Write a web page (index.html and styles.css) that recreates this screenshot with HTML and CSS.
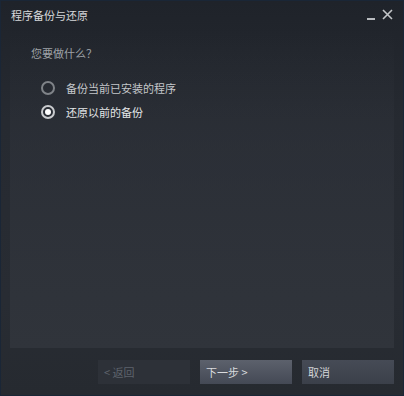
FILE: index.html
```html
<!DOCTYPE html>
<html lang="zh-CN">
<head>
    <meta charset="UTF-8">
    <title>程序备份与还原</title>
    <link rel="stylesheet" href="styles.css">
</head>
<body>
    <div class="window">
        <!-- Title bar -->
        <div class="titlebar">
            <span class="title">程序备份与还原</span>
            <div class="controls">
                <svg class="ctl" width="10" height="10" viewBox="0 0 10 10">
                    <rect x="1" y="8" width="8" height="2" fill="#b9bcc0"/>
                </svg>
                <svg class="ctl" width="11" height="11" viewBox="0 0 11 11">
                    <path d="M1 1 L10 10 M10 1 L1 10" stroke="#c3c6c9" stroke-width="1.6"/>
                </svg>
            </div>
        </div>

        <!-- Options -->
        <div class="panel">
            <p class="question">您要做什么？</p>
            <div class="options">
                <label class="option">
                    <span class="radio"></span>
                    备份当前已安装的程序
                </label>
                <label class="option selected">
                    <span class="radio"></span>
                    还原以前的备份
                </label>
            </div>
        </div>

        <!-- Buttons -->
        <div class="footer">
            <button class="btn btn-disabled">&lt; 返回</button>
            <button class="btn btn-primary">下一步 &gt;</button>
            <button class="btn btn-secondary">取消</button>
        </div>
    </div>
</body>
</html>
```

FILE: styles.css
```css
body {
    margin: 0;
    background: #1b2030;
    font-family: "Noto Sans CJK SC", "Noto Sans", Arial, sans-serif;
    font-size: 11px;
}
.window {
    width: 402px;
    height: 394px;
    border: 1px solid #1a2636;
    background: linear-gradient(to bottom, #1f232a 0, #262a31 120px, #282c33 300px, #262a30 100%);
    display: flex;
    flex-direction: column;
}
.titlebar {
    height: 30px;
    display: flex;
    justify-content: space-between;
    align-items: flex-start;
    padding: 0 10px;
}
.title {
    color: #d6d8da;
    margin-top: 7px;
    line-height: 14px;
}
.controls {
    display: flex;
    align-items: flex-end;
    gap: 6px;
    margin-top: 8px;
    margin-right: 0;
}
.panel {
    height: 317px;
    margin: 0 9px;
    padding: 15px 21px 0;
    box-sizing: border-box;
    background: linear-gradient(to bottom, rgba(48, 52, 60, 0) 0, rgba(48, 52, 60, 0.5) 120px, #30343b 100%);
}
.question {
    margin: 0;
    line-height: 14px;
    color: #9ea2a7;
}
.options {
    margin-top: 16px;
    padding-left: 10px;
}
.option {
    display: flex;
    align-items: center;
    height: 24px;
    gap: 11px;
    color: #c4c7ca;
}
.option.selected {
    color: #e4e6e8;
}
.radio {
    width: 14px;
    height: 14px;
    box-sizing: border-box;
    border: 2px solid #7f8388;
    border-radius: 50%;
    display: flex;
    align-items: center;
    justify-content: center;
}
.selected .radio {
    border-color: #c9cbce;
}
.selected .radio::after {
    content: '';
    width: 6px;
    height: 6px;
    border-radius: 50%;
    background: #ffffff;
}
.footer {
    display: flex;
    justify-content: flex-end;
    gap: 10px;
    padding: 12px 9px 0;
}
.btn {
    width: 92px;
    height: 24px;
    border: none;
    padding: 0 6px;
    text-align: left;
    font-family: inherit;
    font-size: 11px;
}
.btn-disabled {
    background: #2d3138;
    color: #5d636c;
}
.btn-primary {
    background: linear-gradient(to bottom, #5c616c, #444955);
    color: #d9dbde;
}
.btn-secondary {
    background: linear-gradient(to bottom, #464b56, #3b404a);
    color: #d2d4d7;
}
```
